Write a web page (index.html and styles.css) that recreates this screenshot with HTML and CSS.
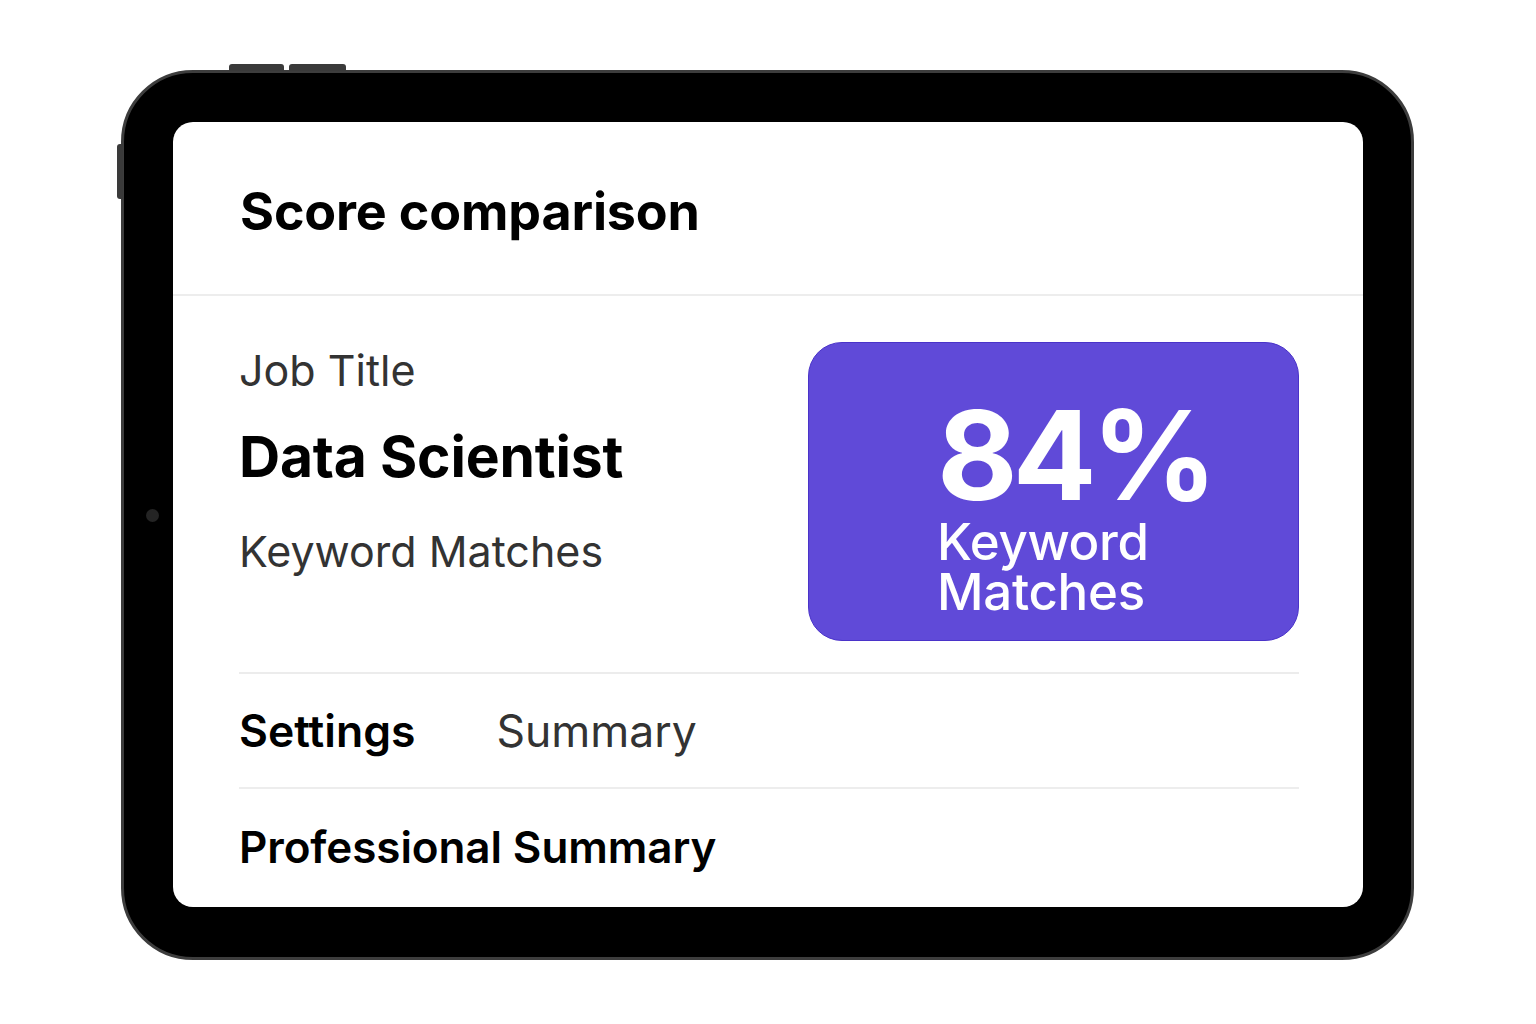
FILE: index.html
```html
<!DOCTYPE html>
<html>
<head>
<meta charset="utf-8">
<link rel="stylesheet" href="styles.css">
</head>
<body>
<div class="stage">
  <div class="device">
    <span class="btn btn-top1"></span>
    <span class="btn btn-top2"></span>
    <span class="btn btn-side"></span>
    <span class="camera"></span>
    <div class="screen">
      <header class="head">
        <h1 class="title">Score comparison</h1>
      </header>
      <section class="body">
        <div class="summary">
          <div class="info">
            <div class="label">Job Title</div>
            <div class="job">Data Scientist</div>
            <div class="label label-kw">Keyword Matches</div>
          </div>
          <div class="score">
            <div class="score-inner">
              <div class="pct">84%</div>
              <div class="pct-label">Keyword<br>Matches</div>
            </div>
          </div>
        </div>
        <nav class="tabs">
          <span class="tab tab-active">Settings</span>
          <span class="tab">Summary</span>
        </nav>
        <div class="section-title">Professional Summary</div>
      </section>
    </div>
  </div>
</div>
</body>
</html>
```
FILE: styles.css
```css
* { box-sizing: border-box; margin: 0; padding: 0; }
html, body { width: 1536px; height: 1024px; background: #fff; overflow: hidden; }
body { font-family: Inter, "Noto Sans", sans-serif; color: #000; }

.stage { padding: 70px 0 0 121px; }

.device {
  position: relative;
  width: 1293px;
  height: 890px;
  background: #000;
  border: 3px solid #3d3d3d;
  border-radius: 72px;
  padding: 49px 48px 50px 49px;
}

.btn { position: absolute; background: #3a3a3a; }
.btn-top1 { top: -9px; left: 105px; width: 55px; height: 7px; border-radius: 3px 3px 0 0; }
.btn-top2 { top: -9px; left: 165px; width: 57px; height: 7px; border-radius: 3px 3px 0 0; }
.btn-side { top: 71px; left: -7px; width: 6px; height: 55px; border-radius: 3px 0 0 3px; }
.camera { position: absolute; top: 436px; left: 22px; width: 13px; height: 13px; border-radius: 50%; background: #242424; }

.screen {
  width: 100%;
  height: 100%;
  background: #fff;
  border-radius: 20px;
  overflow: hidden;
  display: flex;
  flex-direction: column;
}

.head {
  height: 174px;
  border-bottom: 2px solid #ededed;
  padding: 58px 0 0 67px;
}
.title { font-size: 52px; font-weight: 700; line-height: 64px; letter-spacing: -0.15px; }

.body { padding: 46px 64px 0 66px; display: flex; flex-direction: column; }

.summary { display: flex; justify-content: space-between; height: 332px; border-bottom: 2px solid #ececec; }
.info { padding-top: 3px; }
.label { font-size: 43px; font-weight: 400; color: #333; line-height: 50px; }
.job { font-size: 57px; font-weight: 700; line-height: 68px; margin-top: 28px; letter-spacing: -0.2px; }
.label-kw { margin-top: 35px; }

.score {
  width: 491px;
  height: 299px;
  background: #604ad8;
  border: 1px solid #4a33c9;
  border-radius: 34px;
  color: #fff;
  padding: 50px 0 0 128px;
}
.pct { font-size: 124px; font-weight: 700; line-height: 124px; letter-spacing: -5px; }
.pct-label { font-size: 51px; font-weight: 500; line-height: 50px; margin-top: 0; letter-spacing: -0.3px; }

.tabs { height: 115px; display: flex; align-items: center; gap: 81px; border-bottom: 2px solid #ededed; }
.tab { font-size: 44.5px; color: #333; line-height: 56px; }
.tab-active { font-weight: 600; color: #000; }

.section-title { font-size: 44px; font-weight: 600; line-height: 56px; margin-top: 30px; letter-spacing: -0.1px; }
```
